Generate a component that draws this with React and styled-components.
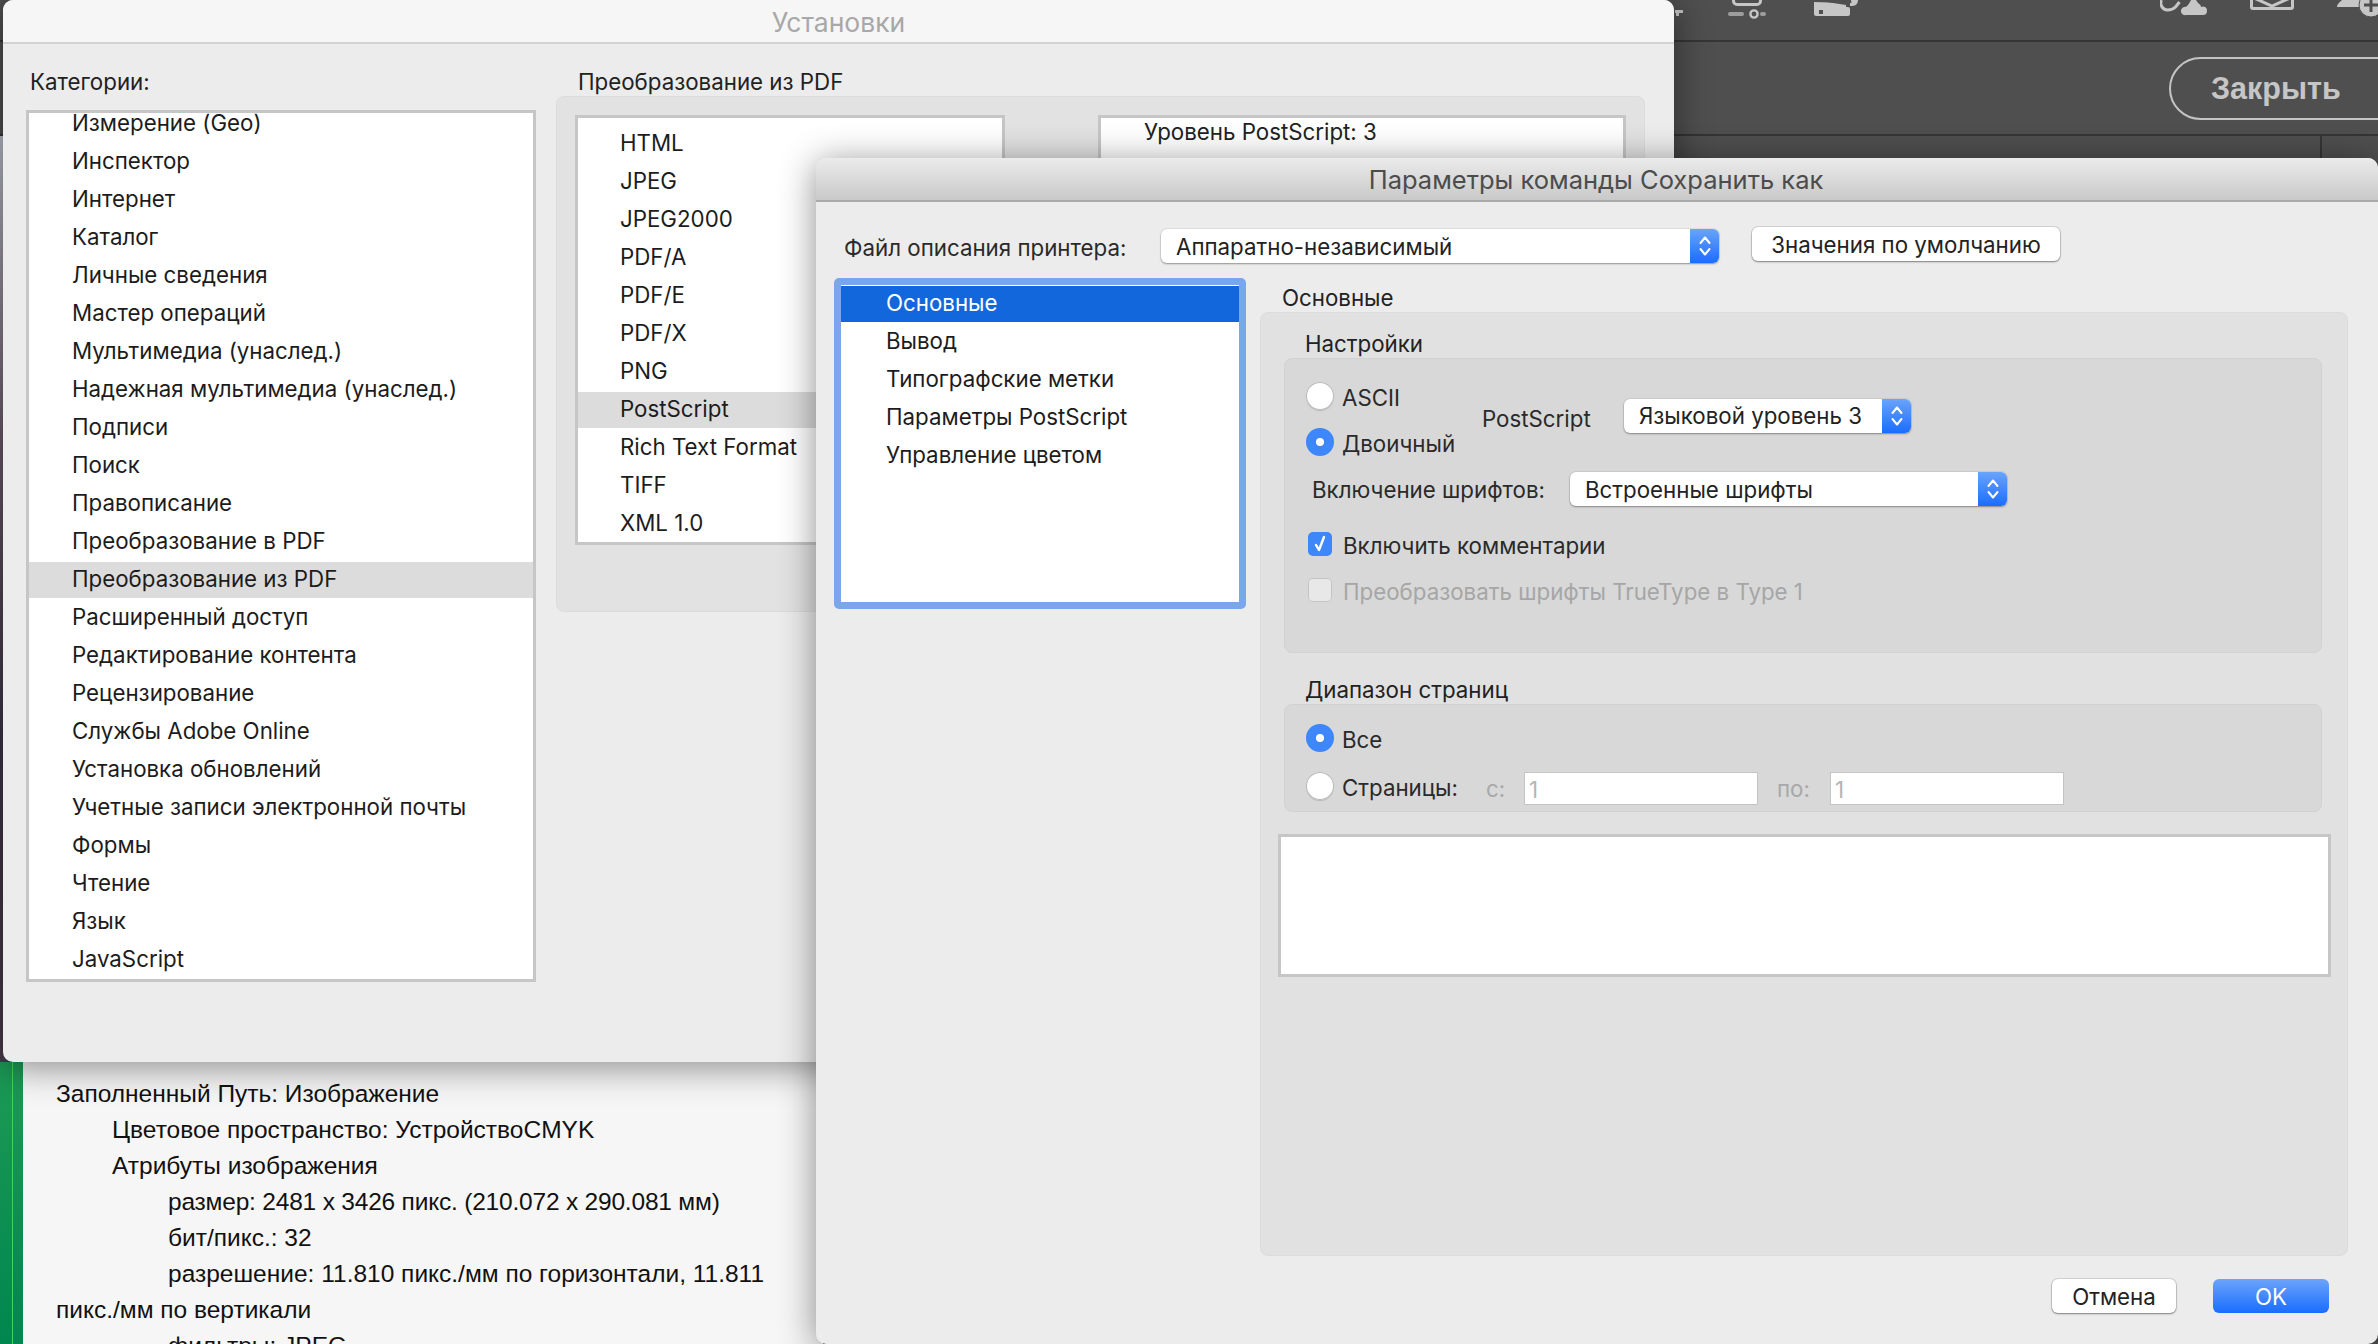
import React from 'react';
import styled, { createGlobalStyle } from 'styled-components';

const ui = '"Inter", "Noto Sans", sans-serif';

const Global = createGlobalStyle`
  html, body { margin: 0; padding: 0; background: #4f4f4f; }
  * { box-sizing: border-box; }
`;

const Desktop = styled.div`
  position: relative; width: 2378px; height: 1344px; overflow: hidden;
  background: #4f4f4f; font-family: ${ui}; display: flex; flex-direction: column;
`;
const TopBar = styled.div`
  height: 42px; flex: none; border-bottom: 2px solid #353535; display: flex;
  color: #c6c6c6; padding-left: 1675px; align-items: flex-start;
`;
const IconSlot = styled.div`margin-left: ${p => p.$left || 0}px; flex: none; display: flex; height: 20px;`;
const CloseBar = styled.div`
  height: 94px; flex: none; border-bottom: 2px solid #353535; display: flex; align-items: center;
  padding-left: 2169px;
`;
const CloseButton = styled.div`
  flex: none; width: 240px; height: 63px; border: 2px solid #c4c4c4; border-radius: 32px;
  color: #c6c6c6; font-weight: 700; font-size: 30.5px; padding-left: 40px; display: flex; align-items: center;
  font-family: "Liberation Sans", sans-serif;
`;
const Lower = styled.div`flex: 1; display: flex; min-height: 0; background: #4f4f4f;`;
const GreenStripe = styled.div`
  width: 23px; flex: none; position: relative;
  background: linear-gradient(#b9bcc8 0, #6a5a68 300px, #3c3344 600px, #4a3a4a 926px, #1d9a55 926px, #00864f 100%);
  &::after { content: ''; position: absolute; left: 12px; top: 926px; bottom: 0; width: 1px; background: #38d860; }
`;
const Page = styled.div`
  width: 800px; flex: none; background: #f6f6f6; padding-left: 33px; display: flex; flex-direction: column; justify-content: flex-end;
  font-family: "Liberation Sans", Arial, sans-serif; font-size: 24.5px; color: #111;
`;
const PageText = styled.div`width: 745px; height: 300px; flex: none; line-height: 36px; padding-top: 32px;`;
const PageLine = styled.div`
  padding-left: ${p => p.$indent || 0}px; white-space: nowrap; letter-spacing: ${p => p.$tight ? '-0.2px' : '0'};
`;
const VLine = styled.div`position: absolute; left: 2320px; top: 136px; width: 2px; height: 24px; background: #353535;`;

const Window = styled.div`
  position: absolute; left: ${p => p.$x}px; top: ${p => p.$y}px; width: ${p => p.$w}px; height: ${p => p.$h}px;
  background: #ececec; border-radius: 10px; box-shadow: 0 5px 36px rgba(0,0,0,.45);
  overflow: hidden; display: flex; flex-direction: column; color: #222;
  font-size: 22.3px;
`;
const SettingsTitle = styled.div`
  height: 44px; flex: none; background: #f6f6f6; border-bottom: 2px solid #d2d2d2; color: #a8a8a8; padding-top: 2px;
  font-size: 26.5px; display: flex; align-items: center; justify-content: center;
`;
const SettingsBody = styled.div`display: flex; padding-left: 23px; gap: 20px; flex: 1; min-height: 0;`;
const Column = styled.div`width: ${p => p.$w}px; flex: none; display: flex; flex-direction: column;`;
const ColumnLabel = styled.div`height: 66px; flex: none; padding: 24px 0 0 ${p => p.$pad}px; line-height: 28px; white-space: nowrap;`;
const Listbox = styled.div`
  flex: none; height: ${p => p.$h}px; width: ${p => p.$w}px; background: #fff; border: 3px solid #c6c6c6; overflow: hidden;
  padding-top: ${p => p.$pt || 0}px;
`;
const ListRows = styled.div`margin-top: ${p => p.$offset || 0}px; display: flex; flex-direction: column;`;
const Row = styled.div`
  height: 38px; flex: none; display: flex; align-items: center; padding: 0 0 6px ${p => p.$pad}px; white-space: nowrap;
  color: ${p => p.$active ? '#fff' : '#1c1c1c'};
  background: ${p => p.$fill ? `linear-gradient(${p.$fill}, ${p.$fill}) top / 100% 36px no-repeat` : 'none'};
`;
const GreyPanel = styled.div`
  margin-top: -14px; width: 1089px; height: 516px; background: #e2e2e2; border: 1px solid #dcdcdc; border-radius: 8px;
  display: flex; align-items: flex-start; padding: 18px 18px 0 18px; justify-content: space-between;
`;
const InfoBox = styled.div`
  width: 528px; height: 430px; background: #fff; border: 3px solid #c6c6c6; padding-left: 43px; line-height: 28px;
`;

const DialogTitle = styled.div`
  height: 44px; flex: none; background: linear-gradient(#ebebeb, #c9c9c9); border-bottom: 2px solid #a9a9a9;
  color: #4c4c4c; font-size: 25.5px; padding: 1px 2px 0 0; display: flex; align-items: center; justify-content: center;
`;
const PrinterRow = styled.div`display: flex; align-items: center; height: 34px; margin: 25px 0 17px; padding-left: 28px; flex: none;`;
const FieldLabel = styled.div`
  width: ${p => p.$w}px; flex: none; white-space: nowrap; padding: ${p => p.$top || 0}px 0 ${p => p.$up || 0}px; color: #2a2a2a;
`;
const Select = styled.div`
  width: ${p => p.$w}px; height: 34px; flex: none; background: #fff; border-radius: 6px; display: flex;
  align-items: center; justify-content: space-between; padding-left: 15px; white-space: nowrap;
  box-shadow: 0 1px 2px rgba(0,0,0,.35), 0 0 0 1px rgba(0,0,0,.05); overflow: hidden;
  margin-top: ${p => p.$top || 0}px;
`;
const Stepper = styled.div`
  width: 29px; height: 100%; flex: none; background: linear-gradient(#6aa4fb, #1a6dff); display: flex; align-items: center; justify-content: center;
`;
const PushButton = styled.div`
  width: ${p => p.$w}px; height: 34px; flex: none; background: #fff; border-radius: 6px; display: flex; align-items: center; justify-content: center;
  box-shadow: 0 1px 2px rgba(0,0,0,.4), 0 0 0 1px rgba(0,0,0,.1); margin-left: ${p => p.$left || 0}px; white-space: nowrap;
`;
const OkButton = styled(PushButton)`
  background: linear-gradient(#6ca4fb, #1a6dff); color: #fff; box-shadow: none;
`;
const MainRow = styled.div`display: flex; padding-left: 18px; gap: 14px; flex: none; height: 978px;`;
const FocusRing = styled.div`
  width: 412px; height: 331px; flex: none; border: 7px solid #7aa7ec; border-radius: 5px; background: #fff; padding-top: 1px;
  display: flex; flex-direction: column; overflow: hidden;
`;
const RightColumn = styled.div`width: 1088px; flex: none; display: flex; flex-direction: column;`;
const RightLabel = styled.div`height: 34px; flex: none; padding-left: 22px; line-height: 40px;`;
const OuterPanel = styled.div`
  width: 1088px; height: 944px; flex: none; background: #e1e1e1; border: 1px solid #dcdcdc; border-radius: 8px; padding: 18px 25px 0 23px;
  display: flex; flex-direction: column;
`;
const GroupLabel = styled.div`height: 27px; flex: none; line-height: 26px; padding-left: 21px;`;
const Group = styled.div`
  height: ${p => p.$h}px; flex: none; background: #d8d8d8; border: 1px solid #d2d2d2; border-radius: 8px; padding: ${p => p.$pt}px 0 0 21px;
  margin-bottom: ${p => p.$mb}px; display: flex; flex-direction: column;
`;
const TopOptions = styled.div`display: flex; align-items: center; flex: none;`;
const RadioColumn = styled.div`width: 176px; flex: none; display: flex; flex-direction: column;`;
const OptionRow = styled.div`
  height: ${p => p.$h || 46}px; display: flex; align-items: center; flex: none; gap: ${p => p.$gap ?? 8}px; white-space: nowrap; padding-top: 2px;
  color: ${p => p.$dim ? '#a6a6a6' : '#2a2a2a'}; margin-left: ${p => p.$left || 0}px; margin-top: ${p => p.$top || 0}px;
`;
const Radio = styled.div`
  width: 28px; height: 28px; flex: none; border-radius: 50%; display: flex; align-items: center; justify-content: center; margin-top: -2px;
  background: ${p => p.$on ? '#3d87fb' : '#fff'};
  box-shadow: ${p => p.$on ? 'none' : 'inset 0 0 0 1px #b8b8b8, 0 1px 1px rgba(0,0,0,.15)'};
  &::after { content: ''; width: 8px; height: 8px; border-radius: 50%; background: ${p => p.$on ? '#fff' : 'transparent'}; }
`;
const Check = styled.div`
  width: 24px; height: 24px; flex: none; border-radius: 5px; display: flex; align-items: center; justify-content: center; margin: -2px 3px 0 0;
  background: ${p => p.$on ? '#3d87fb' : '#e8e8e8'};
  box-shadow: ${p => p.$on ? 'none' : 'inset 0 0 0 1px #c4c4c4'};
`;
const FontRow = styled.div`display: flex; align-items: center; height: 48px; flex: none; margin-left: 6px;`;
const PagesLabel = styled.div`width: 136px; flex: none;`;
const FromLabel = styled.div`width: ${p => p.$w}px; flex: none; color: #a8a8a8;`;
const PageInput = styled.div`
  width: 234px; height: 33px; flex: none; background: #fff; border: 1px solid #c4c4c4; color: #b6b6b6; padding-left: 4px; line-height: 33px; margin-right: ${p => p.$mr || 0}px;
`;
const PreviewBox = styled.div`
  margin-left: -6px; width: 1053px; height: 143px; flex: none; background: #fff; border: 3px solid #c6c6c6;
`;
const Footer = styled.div`display: flex; justify-content: flex-end; padding: 23px 49px 0 0; flex: none;`;

const Chevrons = () => (
  <svg width="14" height="24" viewBox="0 0 14 24" fill="none" stroke="#fff" strokeWidth="2" strokeLinecap="round" strokeLinejoin="round">
    <path d="M2.5 9 7 3.5 11.5 9" /><path d="M2.5 15 7 20.5 11.5 15" />
  </svg>
);
const Tick = () => (
  <svg width="16" height="20" viewBox="0 0 16 20" fill="none" stroke="#fff" strokeWidth="2.4" strokeLinecap="round" strokeLinejoin="round">
    <path d="M4 11 7 16 12 3" />
  </svg>
);
const StubIcon = () => (
  <svg width="8" height="20" viewBox="0 0 8 20" fill="currentColor"><path d="M0 10h7a1 1 0 0 1 0 3H4v3H1v-3H0z" /></svg>
);
const SliderIcon = () => (
  <svg width="38" height="20" viewBox="0 0 38 20">
    <path d="M5.500 -4v5a3.500 3.500 0 0 0 3.500 3.500h20a3.500 3.500 0 0 0 3.500-3.500v-5" fill="none" stroke="currentColor" strokeWidth="3" />
    <rect x="0" y="12" width="16" height="4" rx="2" fill="#9c9c9c" />
    <rect x="32" y="12" width="6" height="4" rx="2" fill="#9c9c9c" />
    <circle cx="26" cy="14" r="3.600" fill="none" stroke="#c6c6c6" strokeWidth="2.400" />
  </svg>
);
const PenIcon = () => (
  <svg width="44" height="20" viewBox="0 0 44 20" fill="currentColor">
    <path d="M0 0 32 5v4l-32 0z" />
    <rect x="0" y="7" width="36" height="9" rx="2" />
    <rect x="5" y="10" width="4" height="4" fill="#4f4f4f" />
    <path d="M37 0h7c0 3-2 6-6 6h-2V3h1c1 0 0-2 0-3z" />
    <path d="M0 0h30l2 3L0 2z" fill="#4f4f4f" />
  </svg>
);
const CloudIcon = () => (
  <svg width="48" height="20" viewBox="0 0 48 20" fill="currentColor">
    <path d="M1.500 0a7 7 0 0 0 6 10c3 0 6-1 8-3l4-5" fill="none" stroke="currentColor" strokeWidth="3" />
    <path d="M26 15a4 4 0 0 1-2-8c3 0 4-2 6-5l1-2h5l2 3c2 1 3 3 3 4a4 4 0 0 1 6 4 4 4 0 0 1-4 4z" />
  </svg>
);
const MailIcon = () => (
  <svg width="44" height="20" viewBox="0 0 44 20" fill="none" stroke="currentColor" strokeWidth="3">
    <path d="M1.500 -2v9a1.500 1.500 0 0 0 1.500 1.500h38a1.500 1.500 0 0 0 1.500-1.500v-9" />
    <path d="M4 -2 22 6 40 -2" />
  </svg>
);
const UserPlusIcon = () => (
  <svg width="46" height="20" viewBox="0 0 46 20" fill="currentColor">
    <path d="M0 7c0-3 3-5 5-7h18v7z" />
    <circle cx="34" cy="5" r="12" stroke="#4f4f4f" strokeWidth="1" />
    <path d="M32.500 -2h3v5.500H41v3h-5.500V12h-3V6.500H27v-3h5.500z" fill="#4f4f4f" />
  </svg>
);

const categories = ['Измерение (Geo)','Инспектор','Интернет','Каталог','Личные сведения','Мастер операций','Мультимедиа (унаслед.)','Надежная мультимедиа (унаслед.)','Подписи','Поиск','Правописание','Преобразование в PDF','Преобразование из PDF','Расширенный доступ','Редактирование контента','Рецензирование','Службы Adobe Online','Установка обновлений','Учетные записи электронной почты','Формы','Чтение','Язык','JavaScript'];
const formats = ['HTML','JPEG','JPEG2000','PDF/A','PDF/E','PDF/X','PNG','PostScript','Rich Text Format','TIFF','XML 1.0'];
const sections = ['Основные','Вывод','Типографские метки','Параметры PostScript','Управление цветом'];

export default function App() {
  return (
    <Desktop>
      <Global />
      <TopBar>
        <IconSlot><StubIcon /></IconSlot>
        <IconSlot $left={45}><SliderIcon /></IconSlot>
        <IconSlot $left={48}><PenIcon /></IconSlot>
        <IconSlot $left={302}><CloudIcon /></IconSlot>
        <IconSlot $left={42}><MailIcon /></IconSlot>
        <IconSlot $left={43}><UserPlusIcon /></IconSlot>
      </TopBar>
      <CloseBar><CloseButton>Закрыть</CloseButton></CloseBar>
      <VLine />
      <Lower>
        <GreenStripe />
        <Page>
          <PageText>
            <PageLine>Заполненный Путь: Изображение</PageLine>
            <PageLine $indent={56}>Цветовое пространство: УстройствоCMYK</PageLine>
            <PageLine $indent={56}>Атрибуты изображения</PageLine>
            <PageLine $indent={112} $tight>размер: 2481 x 3426 пикс. (210.072 x 290.081 мм)</PageLine>
            <PageLine $indent={112}>бит/пикс.: 32</PageLine>
            <PageLine $indent={112}>разрешение: 11.810 пикс./мм по горизонтали, 11.811</PageLine>
            <PageLine>пикс./мм по вертикали</PageLine>
            <PageLine $indent={112}>фильтры: JPEG</PageLine>
          </PageText>
        </Page>
      </Lower>

      <Window $x={3} $y={0} $w={1671} $h={1062}>
        <SettingsTitle>Установки</SettingsTitle>
        <SettingsBody>
          <Column $w={510}>
            <ColumnLabel $pad={4}>Категории:</ColumnLabel>
            <Listbox $h={872} $w={510}>
              <ListRows $offset={-7}>
                {categories.map(c => (
                  <Row key={c} $pad={43} $fill={c === 'Преобразование из PDF' ? '#dcdcdc' : undefined}>{c}</Row>
                ))}
              </ListRows>
            </Listbox>
          </Column>
          <Column $w={1089}>
            <ColumnLabel $pad={22}>Преобразование из PDF</ColumnLabel>
            <GreyPanel>
              <Listbox $h={430} $w={430} $pt={8}>
                <ListRows>
                  {formats.map(f => (
                    <Row key={f} $pad={42} $fill={f === 'PostScript' ? '#dcdcdc' : undefined}>{f}</Row>
                  ))}
                </ListRows>
              </Listbox>
              <InfoBox>Уровень PostScript: 3</InfoBox>
            </GreyPanel>
          </Column>
        </SettingsBody>
      </Window>

      <Window $x={816} $y={158} $w={1562} $h={1186}>
        <DialogTitle>Параметры команды Сохранить как</DialogTitle>
        <PrinterRow>
          <FieldLabel $w={317} $top={7}>Файл описания принтера:</FieldLabel>
          <Select $w={558} $top={4}>Аппаратно-независимый<Stepper><Chevrons /></Stepper></Select>
          <PushButton $w={308} $left={33}>Значения по умолчанию</PushButton>
        </PrinterRow>
        <MainRow>
          <FocusRing>
            {sections.map((s, i) => (
              <Row key={s} $pad={45} $active={i === 0} $fill={i === 0 ? '#1367dd' : undefined}>{s}</Row>
            ))}
          </FocusRing>
          <RightColumn>
            <RightLabel>Основные</RightLabel>
            <OuterPanel>
              <GroupLabel>Настройки</GroupLabel>
              <Group $h={295} $pt={14} $mb={24}>
                <TopOptions>
                  <RadioColumn>
                    <OptionRow><Radio />ASCII</OptionRow>
                    <OptionRow><Radio $on />Двоичный</OptionRow>
                  </RadioColumn>
                  <FieldLabel $w={142} $up={2}>PostScript</FieldLabel>
                  <Select $w={287} $top={-7}>Языковой уровень 3<Stepper><Chevrons /></Stepper></Select>
                </TopOptions>
                <FontRow>
                  <FieldLabel $w={258}>Включение шрифтов:</FieldLabel>
                  <Select $w={437}>Встроенные шрифты<Stepper><Chevrons /></Stepper></Select>
                </FontRow>
                <OptionRow $left={2} $top={8}><Check $on><Tick /></Check>Включить комментарии</OptionRow>
                <OptionRow $left={2} $dim><Check />Преобразовать шрифты TrueType в Type 1</OptionRow>
              </Group>
              <GroupLabel>Диапазон страниц</GroupLabel>
              <Group $h={108} $pt={10} $mb={22}>
                <OptionRow><Radio $on />Все</OptionRow>
                <OptionRow $h={50}>
                  <Radio />
                  <PagesLabel>Страницы:</PagesLabel>
                  <OptionRow $h={48} $gap={0}>
                    <FromLabel $w={38}>с:</FromLabel>
                    <PageInput $mr={19}>1</PageInput>
                    <FromLabel $w={53}>по:</FromLabel>
                    <PageInput>1</PageInput>
                  </OptionRow>
                </OptionRow>
              </Group>
              <PreviewBox />
            </OuterPanel>
          </RightColumn>
        </MainRow>
        <Footer>
          <PushButton $w={124}>Отмена</PushButton>
          <OkButton $w={116} $left={37}>OK</OkButton>
        </Footer>
      </Window>
    </Desktop>
  );
}
